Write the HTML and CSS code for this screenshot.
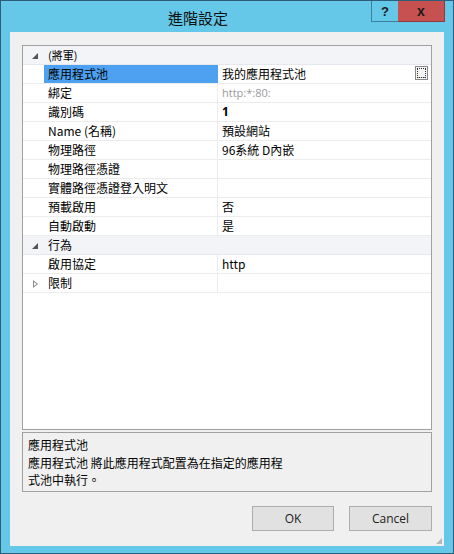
FILE: index.html
```html
<!DOCTYPE html>
<html lang="zh-Hant">
<head>
  <meta charset="UTF-8" />
  <title>進階設定</title>
  <link rel="stylesheet" href="styles.css">
</head>
<body>
  <div class="window">
    <div class="titlebar">
      <span class="title">進階設定</span>
      <div class="caption-btns">
        <span class="cap help">?</span>
        <span class="cap close">x</span>
      </div>
    </div>

    <div class="client">
      <div class="grid">
        <div class="row cat">
          <span class="gutter"><span class="tri open"></span></span>
          <span class="cat-name small">(將軍)</span>
        </div>
        <div class="row selected">
          <span class="gutter"></span>
          <span class="name">應用程式池</span>
          <span class="value">我的應用程式池<span class="ellipsis">...</span></span>
        </div>
        <div class="row">
          <span class="gutter"></span>
          <span class="name">綁定</span>
          <span class="value muted">http:*:80:</span>
        </div>
        <div class="row">
          <span class="gutter"></span>
          <span class="name">識別碼</span>
          <span class="value bold">1</span>
        </div>
        <div class="row">
          <span class="gutter"></span>
          <span class="name">Name (名稱)</span>
          <span class="value">預設網站</span>
        </div>
        <div class="row">
          <span class="gutter"></span>
          <span class="name">物理路徑</span>
          <span class="value">96系統 D內嵌</span>
        </div>
        <div class="row">
          <span class="gutter"></span>
          <span class="name">物理路徑憑證</span>
          <span class="value"></span>
        </div>
        <div class="row">
          <span class="gutter"></span>
          <span class="name">實體路徑憑證登入明文</span>
          <span class="value"></span>
        </div>
        <div class="row">
          <span class="gutter"></span>
          <span class="name">預載啟用</span>
          <span class="value">否</span>
        </div>
        <div class="row">
          <span class="gutter"></span>
          <span class="name">自動啟動</span>
          <span class="value">是</span>
        </div>
        <div class="row cat">
          <span class="gutter"><span class="tri open"></span></span>
          <span class="cat-name">行為</span>
        </div>
        <div class="row">
          <span class="gutter"></span>
          <span class="name">啟用協定</span>
          <span class="value">http</span>
        </div>
        <div class="row">
          <span class="gutter"><span class="tri closed"></span></span>
          <span class="name">限制</span>
          <span class="value"></span>
        </div>
      </div>

      <div class="desc">
        <div class="desc-title">應用程式池</div>
        <div class="desc-text">應用程式池 將此應用程式配置為在指定的應用程<br>式池中執行。</div>
      </div>

      <div class="buttons">
        <button class="btn">OK</button>
        <button class="btn">Cancel</button>
      </div>
      <span class="grip"></span>
    </div>
  </div>
</body>
</html>
```

FILE: styles.css
```css
body {
  margin: 0;
  padding: 0;
  font-family: "Noto Sans CJK TC", "Noto Sans", sans-serif;
  font-size: 12px;
  color: #000;
  background: #65c8e8;
}

.window {
  width: 454px;
  height: 554px;
  box-sizing: border-box;
  border: 1px solid #2e5d78;
  background: #65c8e8;
  display: flex;
  flex-direction: column;
}

.titlebar {
  height: 31px;
  position: relative;
  display: flex;
  align-items: center;
  justify-content: center;
}

.title {
  font-size: 15px;
  color: #111;
  margin-left: -58px;
  margin-top: 2px;
}

.caption-btns {
  position: absolute;
  top: 0;
  right: 8px;
  display: flex;
  height: 21px;
}

.cap {
  display: flex;
  align-items: center;
  justify-content: center;
  font-family: "Liberation Sans", sans-serif;
  font-weight: bold;
  height: 21px;
  box-sizing: border-box;
}

.help {
  width: 27px;
  font-size: 13px;
  color: #1a1a1a;
  border-left: 1px solid #3f7f9c;
  border-bottom: 1px solid #3f7f9c;
}

.close {
  width: 47px;
  font-size: 14px;
  color: #1a1a1a;
  background: #c75050;
  border-bottom: 1px solid #8e3a3a;
  border-right: 1px solid #8e3a3a;
}

.client {
  flex: 1;
  margin: 0 9px 7px 9px;
  background: #f0f0f0;
  padding: 13px 12px 0 12px;
  display: flex;
  flex-direction: column;
  position: relative;
}

.grid {
  height: 385px;
  box-sizing: border-box;
  border: 1px solid #a0a0a0;
  background: #fff;
  width: 410px;
}

.row {
  display: flex;
  height: 19px;
  box-sizing: border-box;
  border-bottom: 1px solid #ececec;
  line-height: 18px;
}

.gutter {
  width: 21px;
  flex: none;
  position: relative;
}

.name {
  width: 174px;
  flex: none;
  padding-left: 4px;
  box-sizing: border-box;
  border-right: 1px solid #ececec;
  white-space: nowrap;
  overflow: hidden;
}

.value {
  flex: 1;
  padding-left: 4px;
  position: relative;
  white-space: nowrap;
}

.cat {
  background: #f2f4f8;
  border-bottom: 1px solid #e4e8ee;
}

.cat-name {
  padding-left: 4px;
}

.cat-name.small {
  font-size: 11px;
}

.selected .name {
  background: #4ea0f0;
  border-right-color: #4ea0f0;
}

.muted {
  color: #9a9a9a;
  font-family: "Open Sans", sans-serif;
  font-size: 11px;
}

.bold {
  font-weight: bold;
  font-family: "Open Sans", sans-serif;
}

.tri {
  position: absolute;
  left: 9px;
  top: 7px;
  width: 0;
  height: 0;
}

.tri.open {
  border-left: 6px solid transparent;
  border-bottom: 6px solid #555;
}

.tri.closed {
  left: 10px;
  top: 6px;
  width: 5px;
  height: 8px;
  background: #8a8a8a;
  clip-path: polygon(0 0, 100% 50%, 0 100%, 0 0, 1px 2px, 1px calc(100% - 2px), calc(100% - 1.5px) 50%, 1px 2px);
}

.ellipsis {
  position: absolute;
  right: 3px;
  top: 1px;
  width: 13px;
  height: 14px;
  box-sizing: border-box;
  border: 1px solid #888;
  outline: 1px dotted #333;
  outline-offset: -3px;
  font-size: 9px;
  line-height: 16px;
  text-align: center;
  font-family: "Liberation Sans", sans-serif;
  background: #f4f4f4;
}

.desc {
  margin-top: 2px;
  height: 60px;
  width: 410px;
  box-sizing: border-box;
  border: 1px solid #a0a0a0;
  background: #f0f0f0;
  padding: 3px 5px;
  line-height: 17px;
}

.desc-text {
  margin-top: 1px;
}

.buttons {
  display: flex;
  justify-content: flex-end;
  gap: 15px;
  margin-top: 14px;
  width: 410px;
}

.btn {
  width: 82px;
  height: 25px;
  background: #e1e1e1;
  border: 1px solid #adadad;
  font-family: "Open Sans", "Noto Sans", sans-serif;
  font-size: 12px;
  color: #222;
  padding: 0;
}

.btn + .btn {
  width: 83px;
}

.grip {
  position: absolute;
  right: 2px;
  bottom: 2px;
  width: 6px;
  height: 6px;
  background: radial-gradient(circle, #b8b8b8 0.8px, transparent 1px) 0 0 / 2px 2px;
  clip-path: polygon(100% 0, 100% 100%, 0 100%);
}
```
